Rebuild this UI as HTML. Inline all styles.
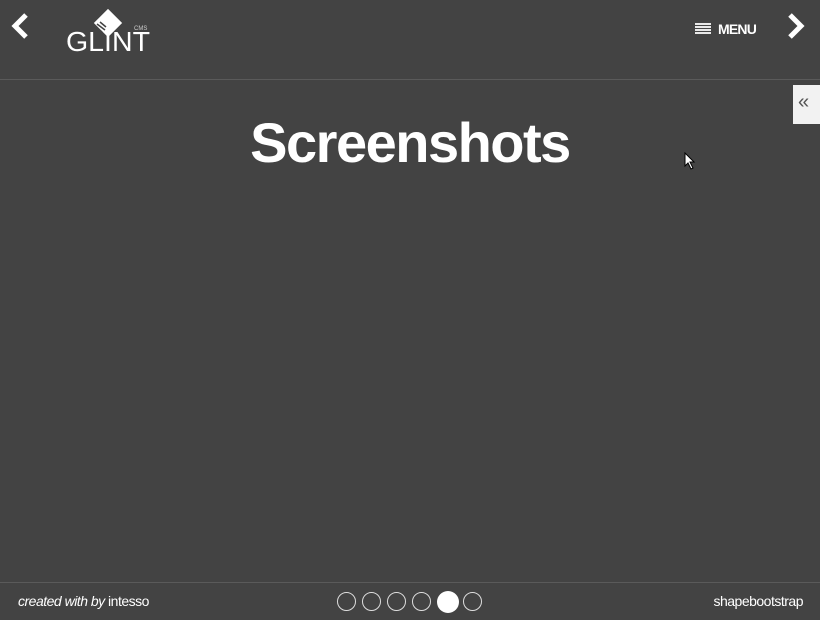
<!DOCTYPE html>
<html><head><style>
html,body{margin:0;padding:0;width:820px;height:620px;background:#434343;overflow:hidden;font-family:"Liberation Sans",sans-serif;color:#fff;position:relative}
.abs{position:absolute}
.line{position:absolute;left:0;width:820px;height:1px;background:#5a5a5a}
h1{position:absolute;top:110px;left:0;width:820px;text-align:center;margin:0;font-size:56px;font-weight:bold;letter-spacing:-1.5px}
.dot{position:absolute;top:592px;width:19px;height:19px;border:1px solid #ddd;border-radius:50%;box-sizing:border-box}
</style></head><body>
<svg class="abs" style="left:8px;top:12px" width="24" height="30"><path d="M18 3 L7 14 L18 25" stroke="#fff" stroke-width="5" fill="none"/></svg>
<svg class="abs" style="left:784px;top:12px" width="24" height="30"><path d="M6 3 L17 14 L6 25" stroke="#fff" stroke-width="5" fill="none"/></svg>
<svg class="abs" style="left:64px;top:6px" width="90" height="50">
<g transform="translate(44,17) rotate(45)"><rect x="-10" y="-10" width="20" height="20" fill="#fff"/></g>
<path d="M30 20 l8 6 M33 18 l8 6 M36 16 l6 5" stroke="#434343" stroke-width="1.5"/>
<text x="2" y="45" font-family="Liberation Sans" font-size="28" fill="#fff" textLength="84" lengthAdjust="spacingAndGlyphs" style="font-weight:100">GLINT</text>
<text x="70" y="24" font-size="6" fill="#ccc">CMS</text>
</svg>
<svg class="abs" style="left:695px;top:23px" width="16" height="12"><path d="M0 1h16M0 4h16M0 7h16M0 10h16" stroke="#fff" stroke-width="1.8"/></svg>
<div class="abs" style="left:718px;top:21px;font-size:14px;font-weight:bold;letter-spacing:-0.8px">MENU</div>
<div class="line" style="top:79px"></div>
<div class="abs" style="left:793px;top:85px;width:27px;height:39px;background:#f2f2f2;color:#555;font-size:20px;line-height:34px;padding-left:5px;box-sizing:border-box">«</div>
<h1>Screenshots</h1>
<div class="line" style="top:582px"></div>
<div class="abs" style="left:18px;top:593px;font-size:14px;letter-spacing:-0.5px"><i>created with by</i> intesso</div>
<div class="abs" style="right:17px;top:593px;font-size:14px;letter-spacing:-0.5px">shapebootstrap</div>
<div class="dot" style="left:337px"></div>
<div class="dot" style="left:362px"></div>
<div class="dot" style="left:387px"></div>
<div class="dot" style="left:412px"></div>
<div class="dot" style="left:437px;top:591px;width:22px;height:22px;background:#fff;border:none"></div>
<div class="dot" style="left:463px"></div>
<svg class="abs" style="left:684px;top:152px" width="12" height="18"><path d="M1 1 L1 14 L4 11 L7 17 L9 16 L6 10 L10 10 Z" fill="#fff" stroke="#000" stroke-width="1"/></svg>
</body></html>
